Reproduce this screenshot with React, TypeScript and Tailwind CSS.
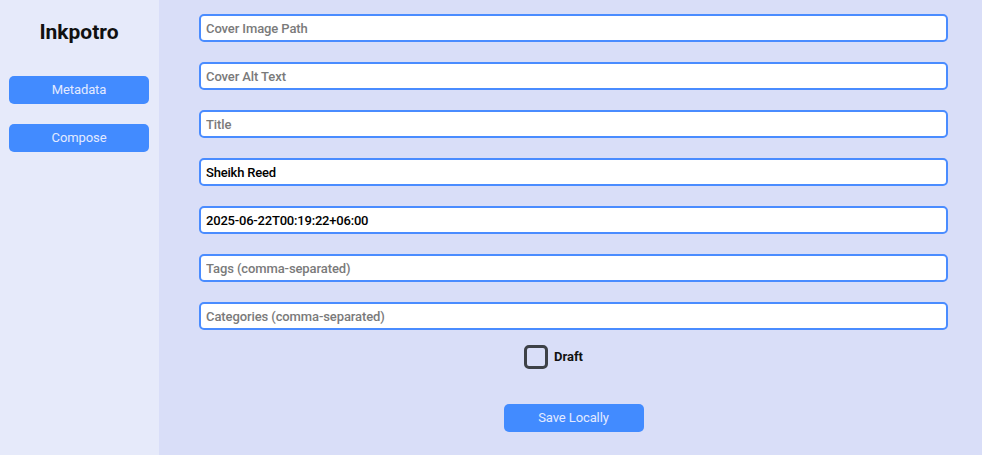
import React from "react";

const fields = [
  { placeholder: "Cover Image Path", value: "" },
  { placeholder: "Cover Alt Text", value: "" },
  { placeholder: "Title", value: "" },
  { placeholder: "Author", value: "Sheikh Reed" },
  { placeholder: "Date", value: "2025-06-22T00:19:22+06:00" },
  { placeholder: "Tags (comma-separated)", value: "" },
  { placeholder: "Categories (comma-separated)", value: "" },
];

export default function App() {
  return (
    <div
      className="flex h-[455px] w-[982px] overflow-hidden"
      style={{ fontFamily: "Roboto, 'Liberation Sans', sans-serif" }}
    >
      {/* sidebar */}
      <aside className="flex w-[159px] shrink-0 flex-col bg-[#e6eafa] pl-[9px] pt-[20px]">
        <h1 className="w-[140px] text-center text-[21px] font-bold leading-[24px] text-[#111]">Inkpotro</h1>
        <button className="mt-[32px] h-[28px] w-[140px] rounded-[5px] bg-[#428bff] text-[13px] tracking-[-0.1px] text-[#e3eaff]">
          Metadata
        </button>
        <button className="mt-[20px] h-[28px] w-[140px] rounded-[5px] bg-[#428bff] text-[13px] tracking-[-0.1px] text-[#e3eaff]">
          Compose
        </button>
      </aside>

      {/* main */}
      <main className="flex flex-1 flex-col bg-[#d9def8] pl-[40px] pr-[34px] pt-[14px]">
        <div className="flex flex-col gap-[20px]">
          {fields.map((f) => (
            <input
              key={f.placeholder}
              defaultValue={f.value}
              placeholder={f.placeholder}
              className="h-[28px] w-full rounded-[5px] border-2 border-[#4a8cff] bg-white px-[5px] text-[13px] font-medium tracking-[-0.2px] text-black outline-none placeholder:tracking-[-0.1px] placeholder:text-[#7a7a7a]"
            />
          ))}
        </div>

        <label className="mt-[15px] flex items-center justify-center gap-[6px] pr-[40px]">
          <span className="h-[24px] w-[24px] rounded-[5px] border-[3px] border-[#3d4147]" />
          <span className="text-[13px] font-bold text-[#111]">Draft</span>
        </label>

        <div className="mt-[35px] flex justify-center">
          <button className="h-[28px] w-[140px] rounded-[5px] bg-[#428bff] text-[13px] tracking-[-0.1px] text-[#e3eaff]">
            Save Locally
          </button>
        </div>
      </main>
    </div>
  );
}
